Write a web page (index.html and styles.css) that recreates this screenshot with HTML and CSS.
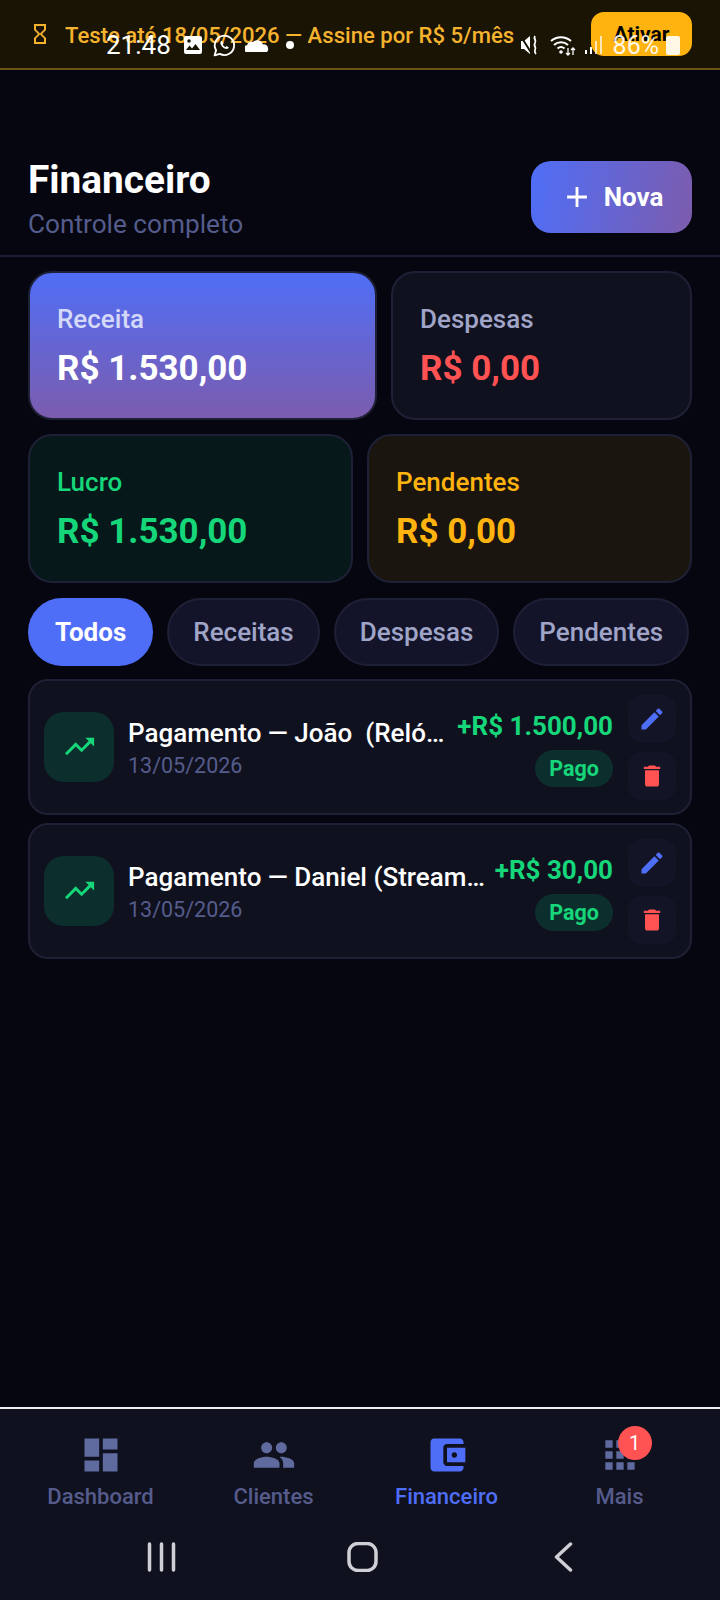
FILE: index.html
```html
<!DOCTYPE html>
<html lang="pt-BR">
<head>
  <meta charset="UTF-8">
  <meta name="viewport" content="width=device-width, initial-scale=1.0">
  <title>Financeiro</title>
  <link rel="stylesheet" href="styles.css">
</head>
<body>
  <!-- barra de status do aparelho, por cima do aviso -->
  <div class="statusbar">
    <span class="status-time">21:48</span>
    <svg class="status-icon pic" viewBox="0 0 20 20"><path d="M3 1h14a2 2 0 0 1 2 2v14a2 2 0 0 1-2 2H3a2 2 0 0 1-2-2V3a2 2 0 0 1 2-2zm0 14h14l-4.500-6-3.500 4.500-2.500-3z" fill-rule="evenodd"/><circle cx="6" cy="6" r="1.800" fill="#1a1405"/></svg>
    <svg class="status-icon wa" viewBox="0 0 24 24"><path d="M2.500 21.500l1.400-5A9.300 9.300 0 1 1 7.500 20z" fill="none" stroke="#fff" stroke-width="1.800" stroke-linejoin="round"/><path d="M9 7.500c-1 .7-1.300 2-.6 3.500 1 2 2.500 3.400 4.600 4.200 1.500.5 2.700 0 3.200-1.200l-2.200-1.500-1 1c-1.200-.5-2.200-1.500-2.700-2.800l.9-1z"/></svg>
    <svg class="status-icon cloud" viewBox="0 0 24 14"><path d="M1 14a3.500 3.500 0 0 1 1-6.800A5 5 0 0 1 8 4a6 6 0 0 1 10 2.500 4 4 0 0 1 5 3.500 4 4 0 0 1-1 4z"/></svg>
    <span class="status-dot"></span>
    <span class="status-gap"></span>
    <svg class="status-icon mute" viewBox="0 0 20 22"><path d="M1 7h3l6-5v18l-6-5H1z"/><path d="M0 1l12 19" stroke="#1a1405" stroke-width="2"/><path d="M15 2c-2 3 2 4 0 7s2 4 0 7c-.5 1.500 0 3 1 4" fill="none" stroke="#fff" stroke-width="1.800"/></svg>
    <svg class="status-icon wifi" viewBox="0 0 27 22"><path d="M1 7a15 15 0 0 1 20 0M4 11a10.500 10.500 0 0 1 14 0M7.500 14.500a5.500 5.500 0 0 1 7 0" fill="none" stroke="#fff" stroke-width="2"/><circle cx="11" cy="18" r="1.800"/><path d="M18 14v7m-2-2l2 2 2-2M23 21v-7m-2 2l2-2 2 2" fill="none" stroke="#fff" stroke-width="1.300"/></svg>
    <svg class="status-icon signal" viewBox="0 0 18 20"><rect x="0" y="15" width="2" height="4"/><rect x="5" y="12" width="2" height="7"/><rect x="10" y="6" width="2" height="13" opacity=".7"/><rect x="15" y="1" width="2" height="18" opacity=".7"/></svg>
    <span class="status-pct">86%</span>
    <span class="status-batt"></span>
  </div>

  <div class="trial">
    <svg class="trial-icon" viewBox="0 0 24 24"><path d="M6 2v6h.01L6 8.010 10 12l-4 4 .01.010H6V22h12v-5.990h-.01L18 16l-4-4 4-3.990-.01-.010H18V2H6zm10 14.500V20H8v-3.500l4-4 4 4zm-4-5l-4-4V4h8v3.500l-4 4z"/></svg>
    <span class="trial-text">Teste até 18/05/2026 — Assine por R$ 5/mês</span>
    <button class="trial-btn">Ativar</button>
  </div>

  <header class="top">
    <div>
      <h1>Financeiro</h1>
      <p>Controle completo</p>
    </div>
    <button class="btn-new">
      <svg viewBox="0 0 24 24"><path d="M19 13h-6v6h-2v-6H5v-2h6V5h2v6h6v2z"/></svg>
      Nova
    </button>
  </header>

  <main>
    <section class="stats stats-a">
      <div class="stat stat-receita">
        <span class="stat-label">Receita</span>
        <span class="stat-value">R$ 1.530,00</span>
      </div>
      <div class="stat">
        <span class="stat-label">Despesas</span>
        <span class="stat-value red">R$ 0,00</span>
      </div>
    </section>
    <section class="stats stats-b">
      <div class="stat stat-lucro">
        <span class="stat-label green">Lucro</span>
        <span class="stat-value green">R$ 1.530,00</span>
      </div>
      <div class="stat stat-pend">
        <span class="stat-label amber">Pendentes</span>
        <span class="stat-value amber">R$ 0,00</span>
      </div>
    </section>

    <nav class="filters">
      <span class="chip active">Todos</span>
      <span class="chip">Receitas</span>
      <span class="chip">Despesas</span>
      <span class="chip">Pendentes</span>
    </nav>

    <ul class="list">
      <li class="item">
        <div class="item-icon"><svg viewBox="0 0 24 24"><path d="M16 6l2.290 2.290-4.880 4.880-4-4L2 16.590 3.410 18l6-6 4 4 6.300-6.290L22 12V6z"/></svg></div>
        <div class="item-info">
          <div class="item-title">Pagamento — João  (Relógio Inteligente)</div>
          <div class="item-date">13/05/2026</div>
        </div>
        <div class="item-side">
          <span class="item-amount">+R$ 1.500,00</span>
          <span class="badge">Pago</span>
        </div>
        <div class="item-actions">
          <button class="act edit"><svg viewBox="0 0 24 24"><path d="M3 17.250V21h3.750L17.810 9.940l-3.750-3.750L3 17.250zM20.710 7.040c.39-.39.39-1.020 0-1.410l-2.340-2.340c-.39-.39-1.020-.39-1.410 0l-1.830 1.830 3.750 3.750 1.830-1.830z"/></svg></button>
          <button class="act del"><svg viewBox="0 0 24 24"><path d="M6 19c0 1.100.9 2 2 2h8c1.100 0 2-.9 2-2V7H6v12zM19 4h-3.500l-1-1h-5l-1 1H5v2h14V4z"/></svg></button>
        </div>
      </li>
      <li class="item">
        <div class="item-icon"><svg viewBox="0 0 24 24"><path d="M16 6l2.290 2.290-4.880 4.880-4-4L2 16.590 3.410 18l6-6 4 4 6.300-6.290L22 12V6z"/></svg></div>
        <div class="item-info">
          <div class="item-title">Pagamento — Daniel (Streaming Premium)</div>
          <div class="item-date">13/05/2026</div>
        </div>
        <div class="item-side">
          <span class="item-amount">+R$ 30,00</span>
          <span class="badge">Pago</span>
        </div>
        <div class="item-actions">
          <button class="act edit"><svg viewBox="0 0 24 24"><path d="M3 17.250V21h3.750L17.810 9.940l-3.750-3.750L3 17.250zM20.710 7.040c.39-.39.39-1.020 0-1.410l-2.340-2.340c-.39-.39-1.020-.39-1.410 0l-1.830 1.830 3.750 3.750 1.830-1.830z"/></svg></button>
          <button class="act del"><svg viewBox="0 0 24 24"><path d="M6 19c0 1.100.9 2 2 2h8c1.100 0 2-.9 2-2V7H6v12zM19 4h-3.500l-1-1h-5l-1 1H5v2h14V4z"/></svg></button>
        </div>
      </li>
    </ul>
  </main>

  <footer class="bottom">
    <nav class="tabs">
      <a class="tab">
        <svg viewBox="0 0 24 24"><path d="M3 13h8V3H3v10zm0 8h8v-6H3v6zm10 0h8V11h-8v10zm0-18v6h8V3h-8z"/></svg>
        Dashboard
      </a>
      <a class="tab">
        <svg viewBox="0 0 24 24"><path d="M16 11c1.660 0 2.990-1.340 2.990-3S17.660 5 16 5c-1.660 0-3 1.340-3 3s1.340 3 3 3zm-8 0c1.660 0 2.990-1.340 2.990-3S9.660 5 8 5C6.340 5 5 6.340 5 8s1.340 3 3 3zm0 2c-2.330 0-7 1.170-7 3.500V19h14v-2.500c0-2.330-4.670-3.500-7-3.500zm8 0c-.29 0-.62.020-.97.050 1.160.84 1.970 1.970 1.970 3.450V19h6v-2.500c0-2.330-4.670-3.500-7-3.500z"/></svg>
        Clientes
      </a>
      <a class="tab active">
        <svg viewBox="0 0 24 24"><path d="M21 18v1c0 1.100-.89 2-2 2H5c-1.110 0-2-.9-2-2V5c0-1.100.89-2 2-2h14c1.100 0 2 .9 2 2v1h-9c-1.110 0-2 .9-2 2v8c0 1.100.89 2 2 2h9zm-9-2h10V8H12v8zm4-2.500c-.83 0-1.500-.67-1.500-1.500s.67-1.500 1.500-1.500 1.500.67 1.500 1.500-.67 1.500-1.500 1.500z"/></svg>
        Financeiro
      </a>
      <a class="tab">
        <svg viewBox="0 0 24 24"><path d="M4 8h4V4H4v4zm6 12h4v-4h-4v4zm-6 0h4v-4H4v4zm0-6h4v-4H4v4zm6 0h4v-4h-4v4zm6-10v4h4V4h-4zm-6 4h4V4h-4v4zm6 6h4v-4h-4v4zm0 6h4v-4h-4v4z"/></svg>
        Mais
        <span class="tab-badge">1</span>
      </a>
    </nav>
    <div class="sysnav">
      <svg class="sys-recent" viewBox="0 0 30 30"><path d="M3 2v26M15 2v26M27 2v26"/></svg>
      <svg class="sys-home" viewBox="0 0 30 30"><rect x="1.500" y="1.500" width="27" height="27" rx="9"/></svg>
      <svg class="sys-back" viewBox="0 0 30 30"><path d="M22 2L8 15l14 13"/></svg>
    </div>
  </footer>
</body>
</html>
```

FILE: styles.css
```css
:root {
  --bg: #05060f;
  --card: #10111f;
  --line: #1e2036;
  --blue: #4f6ef7;
  --purple: #7c5cad;
  --green: #16d67a;
  --red: #ff5252;
  --amber: #ffb30f;
  --muted: #555c8c;
  --soft: #a0a5c8;
}
* { box-sizing: border-box; }
html, body { height: 100%; }
body {
  margin: 0;
  height: 1600px;
  display: flex;
  flex-direction: column;
  position: relative;
  font-family: Roboto, "Noto Sans", sans-serif;
  background-color: var(--bg);
  color: white;
  overflow: hidden;
}
button { font-family: inherit; border: none; }

/* status bar */
.statusbar {
  position: absolute;
  top: 33px;
  left: 106px;
  right: 40px;
  height: 24px;
  display: flex;
  align-items: center;
  color: #fff;
  z-index: 5;
}
.status-time { font-size: 26px; width: 77px; }
.status-icon { fill: #fff; display: block; flex: none; }
.pic { width: 20px; height: 20px; }
.wa { width: 25px; height: 25px; margin-left: 9px; }
.cloud { width: 24px; height: 14px; margin-left: 8px; }
.status-dot { width: 8px; height: 8px; border-radius: 50%; background: #fff; margin-left: 17px; }
.status-gap { flex: 1; }
.mute { width: 20px; height: 22px; }
.wifi { width: 27px; height: 22px; margin-left: 10px; }
.signal { width: 18px; height: 20px; margin-left: 8px; }
.status-pct { font-size: 25px; margin-left: 10px; opacity: .9; }
.status-batt { width: 14px; height: 19px; border-radius: 2px; background: #fff; margin-left: 7px; opacity: .9; }

/* aviso de teste */
.trial {
  height: 70px;
  flex: none;
  display: flex;
  align-items: flex-start;
  padding: 12px 28px 0 28px;
  background-color: #1a1405;
  border-bottom: 2px solid #6b5216;
}
.trial-icon { width: 24px; height: 24px; margin-top: 10px; fill: #f5b22e; flex: none; }
.trial-text { flex: 1; margin-left: 13px; line-height: 46px; font-size: 22.100px; font-weight: 500; color: #f5b22e; }
.trial-btn {
  width: 101px;
  height: 44px;
  border-radius: 13px;
  background-color: var(--amber);
  color: #000;
  font-size: 21px;
  font-weight: 700;
}

/* cabecalho */
.top {
  flex: none;
  height: 187px;
  display: flex;
  justify-content: space-between;
  align-items: center;
  padding: 71px 28px 0 28px;
  border-bottom: 2px solid #1b1d32;
}
.top h1 { margin: 0; font-size: 38.800px; line-height: 46px; font-weight: 700; }
.top p { margin: 5px 0 0; font-size: 26.200px; line-height: 32px; color: var(--muted); }
.btn-new {
  width: 161px;
  height: 72px;
  margin-top: -2px;
  display: flex;
  align-items: center;
  justify-content: center;
  gap: 10px;
  border-radius: 20px;
  background: linear-gradient(100deg, var(--blue), var(--purple));
  color: white;
  font-size: 26px;
  font-weight: 700;
}
.btn-new svg { width: 34px; height: 34px; fill: white; }

/* cards */
main { flex: 1; padding: 14px 28px 0; min-height: 0; }
.stats { display: grid; gap: 14px; margin-bottom: 14px; }
.stats-a { grid-template-columns: 349px 1fr; }
.stats-b { grid-template-columns: 1fr 1fr; margin-bottom: 15px; }
.stat {
  height: 149px;
  padding: 2px 27px 0;
  display: flex;
  flex-direction: column;
  justify-content: center;
  gap: 15px;
  border-radius: 24px;
  border: 2px solid var(--line);
  background-color: var(--card);
}
.stat-receita { background: linear-gradient(180deg, var(--blue), var(--purple)); background-origin: border-box; }
.stat-lucro { background-color: #06181a; }
.stat-pend { background-color: #1a150f; }
.stat-label { font-size: 26px; line-height: 30px; font-weight: 500; color: var(--soft); }
.stat-receita .stat-label { color: #d5d9f8; }
.stat-value { font-size: 35px; line-height: 40px; font-weight: 700; }
.stat-label.green, .stat-value.green { color: var(--green); }
.stat-label.amber, .stat-value.amber { color: var(--amber); }
.stat-value.red { color: var(--red); }

/* filtros */
.filters { display: flex; gap: 14px; margin-bottom: 13px; }
.chip {
  height: 68px;
  padding: 0 24px;
  display: flex;
  align-items: center;
  border-radius: 34px;
  border: 2px solid var(--line);
  background-color: #13142a;
  color: var(--soft);
  font-size: 26px;
  font-weight: 500;
}
.chip.active { padding: 0 25px; background-color: var(--blue); border-color: var(--blue); color: white; font-weight: 700; }

/* lista */
.list { list-style: none; margin: 0; padding: 0; display: flex; flex-direction: column; gap: 8px; }
.item {
  display: flex;
  align-items: center;
  height: 136px;
  padding: 0 14px;
  border-radius: 20px;
  border: 2px solid var(--line);
  background-color: var(--card);
}
.item-icon {
  width: 70px;
  height: 70px;
  flex: none;
  display: flex;
  align-items: center;
  justify-content: center;
  border-radius: 20px;
  background-color: #0c2f2d;
}
.item-icon svg { width: 35px; height: 35px; margin-top: -2px; fill: var(--green); }
.item-info { flex: 1; min-width: 0; margin-left: 14px; padding-top: 3px; }
.item-title {
  font-size: 26px;
  line-height: 32px;
  font-weight: 500;
  white-space: pre;
  overflow: hidden;
  text-overflow: ellipsis;
}
.item-date { margin-top: 2px; font-size: 21.500px; line-height: 30px; color: var(--muted); }
.item-side { flex: none; margin-left: 8px; padding-top: 4px; display: flex; flex-direction: column; align-items: flex-end; gap: 9px; }
.item-amount { font-size: 26px; line-height: 30px; font-weight: 700; color: var(--green); }
.badge {
  height: 37px;
  padding: 0 14px;
  display: flex;
  align-items: center;
  border-radius: 19px;
  background-color: #0c2f2d;
  color: var(--green);
  font-size: 21.500px;
  font-weight: 700;
}
.item-actions { flex: none; margin-left: 15px; display: flex; flex-direction: column; gap: 9px; }
.act {
  width: 48px;
  height: 48px;
  padding: 0;
  display: flex;
  align-items: center;
  justify-content: center;
  border-radius: 14px;
  background-color: #131425;
}
.act svg { width: 28px; height: 28px; }
.edit svg { fill: var(--blue); }
.del svg { fill: var(--red); }

/* navegacao */
.bottom {
  flex: none;
  height: 193px;
  border-top: 2px solid #f0f0f4;
  background-color: var(--card);
}
.tabs { display: flex; padding: 24px 14px 0; }
.tab {
  flex: 1;
  position: relative;
  display: flex;
  flex-direction: column;
  align-items: center;
  color: var(--muted);
  font-size: 22px;
  line-height: 28px;
  font-weight: 500;
}
.tab svg { width: 44px; height: 44px; fill: #5f6a9e; margin-bottom: 6px; }
.tab.active { color: var(--blue); }
.tab.active svg { fill: var(--blue); }
.tab-badge {
  position: absolute;
  top: -7px;
  left: 50%;
  margin-left: -2px;
  width: 34px;
  height: 34px;
  border-radius: 50%;
  display: flex;
  align-items: center;
  justify-content: center;
  background-color: var(--red);
  color: white;
  font-size: 20px;
  font-weight: 400;
}
.sysnav { display: flex; padding: 31px 56px 0 61px; }
.sysnav svg {
  flex: 1;
  height: 30px;
  fill: none;
  stroke: #cfcfd6;
  stroke-width: 3.500;
  stroke-linecap: round;
  stroke-linejoin: round;
}
```
